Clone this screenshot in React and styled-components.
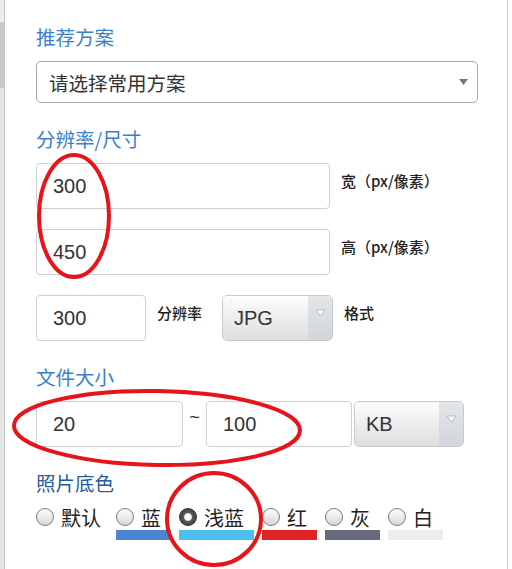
import React from 'react';
import styled, { createGlobalStyle } from 'styled-components';

const GlobalStyle = createGlobalStyle`
  html, body { margin: 0; padding: 0; background: #fff; }
  body { font-family: "Liberation Sans", "Noto Sans CJK SC", sans-serif; }
`;

const Page = styled.div`
  position: relative;
  display: flex;
  width: 512px;
  height: 569px;
  overflow: hidden;
  background: #fff;
`;

const SideStrip = styled.div`
  width: 4px;
  flex: none;
  border-right: 1px solid #c4c4c4;
  background: linear-gradient(to bottom, #ececec 0, #ececec 22px, #c9c9c9 22px, #c9c9c9 88px, #e6e6e6 88px);
`;

const Main = styled.div`
  flex: none;
  width: 503px;
  padding: 25px 0 0 31px;
  border-right: 1px solid #c9c9c9;
  box-sizing: border-box;
`;

const Heading = styled.div`
  font-family: "Noto Sans CJK SC", sans-serif;
  font-size: 19.5px;
  line-height: 24px;
  color: ${p => p.$dark ? '#255c9f' : '#3a80cd'};
  margin: ${p => p.$first ? '0' : '24px'} 0 12px;
`;

const PlainSelect = styled.div`
  display: flex;
  align-items: center;
  justify-content: space-between;
  width: 442px;
  height: 42px;
  box-sizing: border-box;
  border: 1px solid #a9a9a9;
  border-radius: 5px;
  padding: 0 8px 0 12px;
  font-family: "Noto Sans CJK SC", sans-serif;
  font-size: 19.5px;
  color: #333;
`;

const Row = styled.div`
  display: flex;
  align-items: flex-start;
  margin-bottom: ${p => p.$gap || 0}px;
`;

const Field = styled.div`
  display: flex;
  align-items: center;
  width: ${p => p.$w}px;
  height: 46px;
  box-sizing: border-box;
  border: 1px solid #cfcfcf;
  border-radius: 4px;
  padding-left: 16px;
  font-size: 20px;
  color: #333;
  flex: none;
`;

const Label = styled.div`
  font-family: "Noto Sans CJK SC", sans-serif;
  font-size: 15px;
  font-weight: 500;
  line-height: 18px;
  color: #222;
  padding-top: 9px;
  margin: 0 ${p => p.$right || 0}px 0 11px;
  white-space: nowrap;
`;

const Tilde = styled.div`
  width: 23px;
  text-align: center;
  font-size: 18px;
  color: #333;
  padding-top: 6px;
`;

const GraySelect = styled.div`
  display: flex;
  width: ${p => p.$w}px;
  height: 46px;
  box-sizing: border-box;
  border: 1px solid #c9c9c9;
  border-radius: 5px;
  overflow: hidden;
  flex: none;
  margin-left: ${p => p.$ml || 0}px;
`;

const GrayValue = styled.div`
  flex: 1;
  display: flex;
  align-items: center;
  padding-left: 11px;
  font-size: 20px;
  color: #333;
  background: linear-gradient(to bottom, #fdfdfd, #dedede);
`;

const GrayArrow = styled.div`
  width: 24px;
  display: flex;
  justify-content: center;
  padding-top: 13px;
  box-sizing: border-box;
  background: linear-gradient(to bottom, #e2e5ea, #d2d6dc);
`;

const RadioRow = styled.div`
  display: flex;
  gap: 8px;
  margin-top: -2px;
`;

const RadioItem = styled.div`
  display: flex;
  flex-direction: column;
  padding-right: ${p => p.$pad}px;
  position: relative;
`;

const RadioHead = styled.div`
  display: flex;
  align-items: center;
  gap: 7px;
  height: 24px;
  font-family: "Noto Sans CJK SC", sans-serif;
  font-size: 20px;
  color: #222;
`;

const Dot = styled.span`
  width: 18px;
  height: 18px;
  box-sizing: border-box;
  border-radius: 50%;
  border: 1px solid ${p => p.$on ? '#333' : '#7c7c7c'};
  background: ${p => p.$on
    ? 'radial-gradient(circle at 50% 50%, #fff 0 2.5px, #d8d8d8 3.5px, #5b5b5b 4.5px, #2f2f2f 100%)'
    : 'linear-gradient(to bottom, #ffffff, #d6d6d6)'};
  flex: none;
`;

const ColourBar = styled.div`
  position: absolute;
  left: 0;
  right: 0;
  top: 25px;
  height: 10px;
  background: ${p => p.$c};
`;

const Overlay = styled.svg`
  position: absolute;
  inset: 0;
  pointer-events: none;
`;

const Caret = ({ fill = '#777', stroke = 'none' }) => (
  <svg width="11" height="8" viewBox="0 0 11 8">
    <path d="M1 1 L10 1 L5.5 7 Z" fill={fill} stroke={stroke} strokeWidth="0.8" />
  </svg>
);

const colours = [
  { t: '默认', pad: 7 },
  { t: '蓝', c: '#4c86d2', pad: 10 },
  { t: '浅蓝', c: '#4fbff2', pad: 10, on: true },
  { t: '红', c: '#e02424', pad: 10 },
  { t: '灰', c: '#666a7c', pad: 10 },
  { t: '白', c: '#ececec', pad: 10 },
];

export default function App() {
  return (
    <Page>
      <GlobalStyle />
      <SideStrip />
      <Main>
        <Heading $first>推荐方案</Heading>
        <PlainSelect>
          <span>请选择常用方案</span>
          <Caret />
        </PlainSelect>

        <Heading>分辨率/尺寸</Heading>
        <Row $gap={20}>
          <Field $w={294}>300</Field>
          <Label>宽（px/像素）</Label>
        </Row>
        <Row $gap={20}>
          <Field $w={294}>450</Field>
          <Label>高（px/像素）</Label>
        </Row>
        <Row>
          <Field $w={110}>300</Field>
          <Label $right={20}>分辨率</Label>
          <GraySelect $w={111}>
            <GrayValue>JPG</GrayValue>
            <GrayArrow><Caret fill="#fff" stroke="#a9adb5" /></GrayArrow>
          </GraySelect>
          <Label>格式</Label>
        </Row>

        <Heading>文件大小</Heading>
        <Row>
          <Field $w={147}>20</Field>
          <Tilde>~</Tilde>
          <Field $w={146}>100</Field>
          <GraySelect $w={110} $ml={2}>
            <GrayValue>KB</GrayValue>
            <GrayArrow><Caret fill="#fff" stroke="#a9adb5" /></GrayArrow>
          </GraySelect>
        </Row>

        <Heading $dark>照片底色</Heading>
        <RadioRow>
          {colours.map(c => (
            <RadioItem key={c.t} $pad={c.pad}>
              <RadioHead>
                <Dot $on={c.on} />
                <span>{c.t}</span>
              </RadioHead>
              {c.c && <ColourBar $c={c.c} />}
            </RadioItem>
          ))}
        </RadioRow>
      </Main>

      <Overlay width="512" height="569" viewBox="0 0 512 569">
        <g fill="none" stroke="#e8141b" strokeWidth="4">
          <ellipse cx="74" cy="216" rx="35" ry="61" />
          <ellipse cx="157" cy="428" rx="143" ry="37" transform="rotate(1 157 428)" />
          <ellipse cx="214" cy="519" rx="47" ry="46" />
        </g>
      </Overlay>
    </Page>
  );
}
